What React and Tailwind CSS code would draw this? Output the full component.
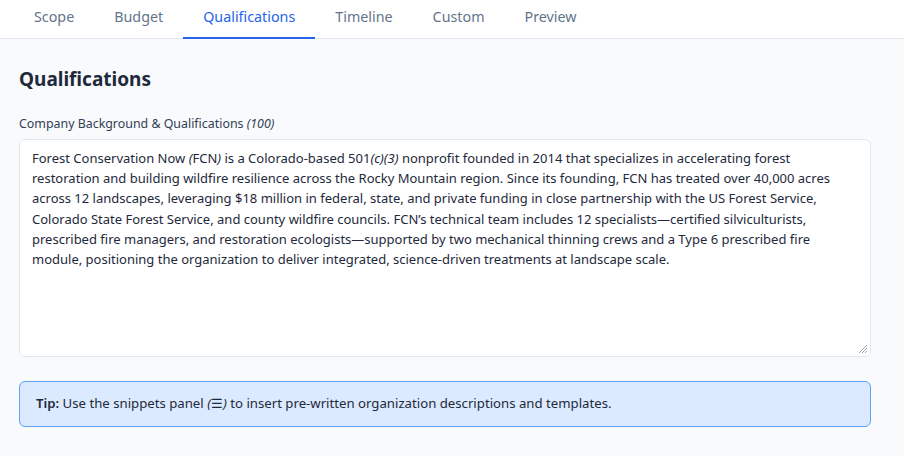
import React, { useState } from 'react';

const TABS = ['Scope', 'Budget', 'Qualifications', 'Timeline', 'Custom', 'Preview'];

// slanted parens, as in the reference's font fallback
const P = ({ children }) => <span className="italic">{children}</span>;

export default function App() {
  const [active, setActive] = useState('Qualifications');

  return (
    <div className="min-h-screen bg-[#f8fafc] text-[#1e293b]" style={{ fontFamily: '"Noto Sans", "Open Sans", sans-serif' }}>
      {/* tab bar */}
      <div className="flex bg-white border-b border-[#e2e8f0] pl-[14px] h-[39px]">
        {TABS.map((t) => (
          <button
            key={t}
            onClick={() => setActive(t)}
            className={`px-[20px] pb-[4px] text-[14.3px] -mb-px border-b-2 ${
              active === t ? 'text-[#2563eb] border-[#2563eb]' : 'text-[#64748b] border-transparent'
            }`}
          >
            {t}
          </button>
        ))}
      </div>

      <div className="pl-[19px] pr-[33px] pt-[28px]">
        <h2 className="text-[19px] font-bold text-[#1e293b] leading-[24px]">Qualifications</h2>

        <label className="block mt-[25px] text-[12.4px] text-[#334155] leading-[16px]">
          Company Background &amp; Qualifications <P>(100)</P>
        </label>

        <div className="mt-[7px] h-[218px] bg-white border border-[#e2e8f0] rounded-md px-3 py-[8px] text-[13px] leading-[20.2px] text-[#1e293b] relative">
          Forest Conservation Now <P>(</P>FCN<P>)</P> is a Colorado-based 501<P>(c)(3)</P> nonprofit founded in 2014 that specializes in accelerating forest restoration and building wildfire resilience across the Rocky Mountain region. Since its founding, FCN has treated over 40,000 acres across 12 landscapes, leveraging $18 million in federal, state, and private funding in close partnership with the US Forest Service, Colorado State Forest Service, and county wildfire councils. FCN’s technical team includes 12 specialists—certified silviculturists, prescribed fire managers, and restoration ecologists—supported by two mechanical thinning crews and a Type 6 prescribed fire module, positioning the organization to deliver integrated, science-driven treatments at landscape scale.
          <svg className="absolute right-[2px] bottom-[2px]" width="10" height="10" viewBox="0 0 10 10">
            <path d="M9 1L1 9M9 4L4 9M9 7L7 9" stroke="#9ca3af" strokeWidth="1" />
          </svg>
        </div>

        <div className="mt-[24px] h-[46px] flex items-center bg-[#dbeafe] border border-[#60a5fa] rounded-md px-4 text-[13.2px] text-[#1e293b]">
          <span>
            <b className="font-semibold">Tip:</b> Use the snippets panel <P>(</P>☰<P>)</P> to insert pre-written organization descriptions and templates.
          </span>
        </div>
      </div>
    </div>
  );
}
